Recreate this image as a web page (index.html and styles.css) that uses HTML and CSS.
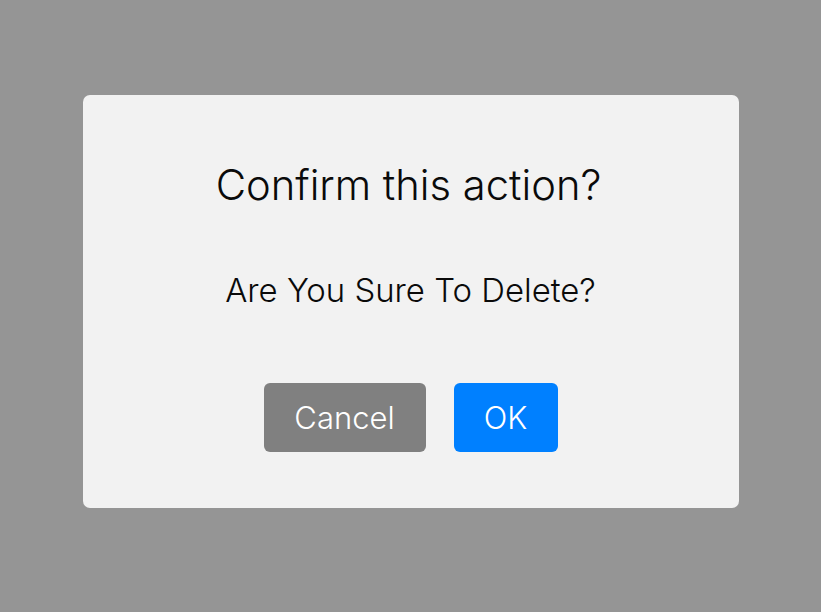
FILE: index.html
```html
<!DOCTYPE html>
<html>
<head>
<meta charset="utf-8">
<title>Confirm</title>
<link rel="stylesheet" href="styles.css">
</head>
<body>
	<div class="overlay">
		<div class="dialog">
			<h2 class="dlgTitle">Confirm this action?</h2>
			<p class="dlgMsg">Are You Sure To Delete?</p>
			<div class="dlgBtns">
				<button class="btn btnCancel">Cancel</button>
				<button class="btn btnOk">OK</button>
			</div>
		</div>
	</div>
</body>
</html>
```
FILE: styles.css
```css
html, body {
	margin: 0;
	height: 100%;
}
body {
	background: #959595;
	font-family: "Inter", "Liberation Sans", sans-serif;
	font-weight: 300;
}
.overlay {
	height: 100%;
	display: flex;
	align-items: center;
	justify-content: center;
	padding-bottom: 9px;
	box-sizing: border-box;
}
.dialog {
	width: 656px;
	height: 413px;
	box-sizing: border-box;
	background: #f2f2f2;
	border-radius: 7px;
	text-align: center;
	padding-top: 60px;
}
.dlgTitle {
	margin: 0 4px 0 0;
	font-size: 41.7px;
	font-weight: 300;
	color: #0a0a0a;
	line-height: 60px;
}
.dlgMsg {
	margin: 55px 0 0;
	font-size: 32.9px;
	color: #0a0a0a;
	line-height: 40px;
}
.dlgBtns {
	display: flex;
	justify-content: center;
	gap: 28px;
	margin-top: 73px;
}
.btn {
	border: 0;
	border-radius: 6px;
	height: 69px;
	color: #fff;
	font-family: "Inter", "Liberation Sans", sans-serif;
	font-weight: 300;
	font-size: 31px;
}
.btnCancel {
	width: 162px;
	background: #808080;
}
.btnOk {
	width: 104px;
	background: #0080ff;
}
```
